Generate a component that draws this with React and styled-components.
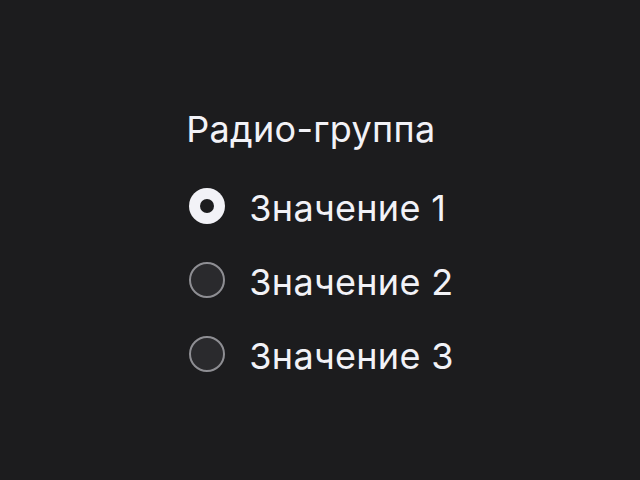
import React, { useState } from "react";
import styled, { createGlobalStyle } from "styled-components";

const Global = createGlobalStyle`
  html, body { margin: 0; padding: 0; background: #1c1c1e; }
  body { font-family: Inter, "Noto Sans", sans-serif; }
`;

const Page = styled.div`
  width: 640px;
  height: 480px;
  display: flex;
  align-items: center;
  justify-content: center;
  background: #1c1c1e;
`;

const Group = styled.div`
  display: flex;
  flex-direction: column;
  gap: 38px;
`;

const Title = styled.div`
  font-size: 36px;
  line-height: 40px;
  letter-spacing: 0.3px;
  color: #f2f2f7;
  margin-bottom: 1px;
`;

const Option = styled.label`
  display: flex;
  align-items: center;
  gap: 24px;
  cursor: pointer;
  height: 36px;
  padding-left: 3px;
`;

const Circle = styled.span`
  box-sizing: border-box;
  flex: none;
  width: 36px;
  height: 36px;
  border-radius: 50%;
  display: flex;
  align-items: center;
  justify-content: center;
  background: ${(p) => (p.$checked ? "#f2f2f7" : "#2a2a2d")};
  border: ${(p) => (p.$checked ? "none" : "2px solid #8e8e93")};
  &::after {
    content: "";
    display: ${(p) => (p.$checked ? "block" : "none")};
    width: 14px;
    height: 14px;
    border-radius: 50%;
    background: #1c1c1e;
  }
`;

const Label = styled.span`
  font-size: 36px;
  line-height: 36px;
  letter-spacing: 0.3px;
  color: #f2f2f7;
  margin-top: 4px;
`;

export default function App() {
  const [value, setValue] = useState(1);
  return (
    <>
      <Global />
      <Page>
        <Group role="radiogroup">
          <Title>Радио-группа</Title>
          {[1, 2, 3].map((n) => (
            <Option key={n} onClick={() => setValue(n)}>
              <Circle $checked={value === n} />
              <Label>Значение {n}</Label>
            </Option>
          ))}
        </Group>
      </Page>
    </>
  );
}
